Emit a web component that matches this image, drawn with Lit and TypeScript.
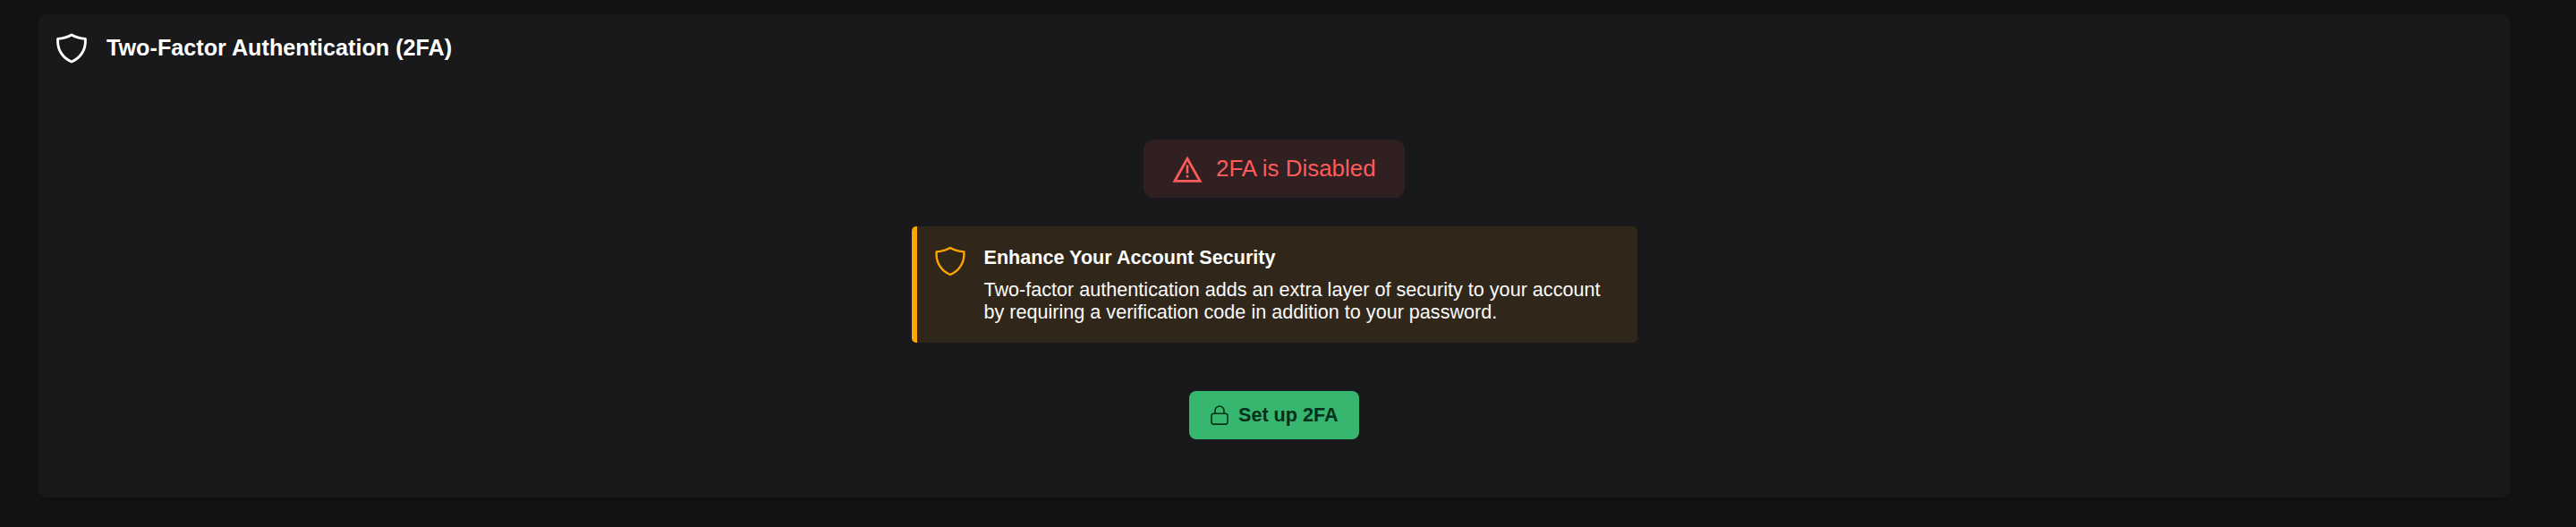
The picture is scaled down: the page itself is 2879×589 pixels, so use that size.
import { LitElement, html, css, svg } from "lit";
import { customElement } from "lit/decorators.js";

const shield = (cls: string, stroke: number) => html`
  <svg class=${cls} viewBox="0 0 34 34" fill="none" stroke="currentColor" stroke-width=${stroke} stroke-linejoin="round">
    ${svg`<path d="M17 2 C12.8 4.5 7.2 6 1.6 6.4 V9.4 C1.6 19.2 7.4 28 17 32 C26.6 28 32.4 19.2 32.4 9.4 V6.4 C26.8 6 21.2 4.5 17 2 Z"/>`}
  </svg>`;

@customElement("app-root")
export class AppRoot extends LitElement {
  static styles = css`
    :host {
      display: block;
      box-sizing: border-box;
      height: 589px;
      padding: 16px 73px 33px 42px;
      background: #131313;
      color: #fff;
      font-family: "Liberation Sans", Arial, sans-serif;
    }
    .card {
      box-sizing: border-box;
      height: 540px;
      border-radius: 11px;
      background: #19191b;
      box-shadow: 0 2px 6px rgba(0, 0, 0, 0.2);
    }
    .header {
      display: flex;
      align-items: center;
      gap: 22px;
      height: 76px;
      padding-left: 21px;
    }
    .title {
      margin: 0;
      padding-bottom: 2px;
      font-size: 25.2px;
      line-height: 30px;
      font-weight: 700;
    }
    .icon {
      display: block;
      flex: none;
      width: 34px;
      height: 34px;
    }
    .body {
      display: flex;
      flex-direction: column;
      align-items: center;
      padding-top: 64px;
    }
    .status {
      display: flex;
      align-items: center;
      box-sizing: border-box;
      width: 292px;
      height: 65px;
      padding-left: 32px;
      gap: 15px;
      border-radius: 12px;
      background: #302021;
      color: #ff5b5b;
      font-size: 25.92px;
      line-height: 31px;
    }
    .notice {
      display: flex;
      box-sizing: border-box;
      width: 811px;
      height: 130px;
      margin-top: 32px;
      padding: 22px 0 0 20px;
      gap: 21px;
      border-left: 6px solid #ffa500;
      border-radius: 5px;
      background: #30271a;
      font-size: 21.6px;
      line-height: 25px;
    }
    .amber {
      color: #ffa500;
    }
    .heading {
      font-weight: 700;
    }
    .text {
      margin: 11px 0 0;
      color: #fafafa;
    }
    .setup {
      display: flex;
      align-items: center;
      box-sizing: border-box;
      width: 190px;
      height: 54px;
      margin: 54px 0 0;
      padding: 0 0 1px 24px;
      gap: 11px;
      border: 0;
      border-radius: 8px;
      background: #36b66f;
      color: #04301a;
      font: 700 21.6px/25px "Liberation Sans", Arial, sans-serif;
    }
    .lock {
      display: block;
      flex: none;
      width: 20px;
      height: 22px;
    }
  `;

  render() {
    return html`
      <section class="card">
        <header class="header">
          ${shield("icon", 2.9)}
          <h2 class="title">Two-Factor Authentication (2FA)</h2>
        </header>
        <div class="body">
          <div class="status">
            <svg class="icon" viewBox="0 0 34 34" fill="none" stroke="currentColor" stroke-width="2.8">
              <path d="M17 5.3 L31.1 30.4 H2.9 Z" />
              <path d="M17 12.6 V21.8 M17 23.8 V26.6" stroke-width="2.6" />
            </svg>
            <span>2FA is Disabled</span>
          </div>
          <div class="notice">
            ${shield("icon amber", 2.4)}
            <div>
              <div class="heading">Enhance Your Account Security</div>
              <p class="text">
                Two-factor authentication adds an extra layer of security to your account<br />by requiring a
                verification code in addition to your password.
              </p>
            </div>
          </div>
          <button class="setup">
            <svg class="lock" viewBox="0 0 20 22" fill="none" stroke="currentColor" stroke-width="1.6">
              <rect x="1" y="9.2" width="18" height="11.9" rx="2.3" />
              <path d="M5 9 V6 A5 5 0 0 1 15 6 V9" />
            </svg>
            <span>Set up 2FA</span>
          </button>
        </div>
      </section>
    `;
  }
}
